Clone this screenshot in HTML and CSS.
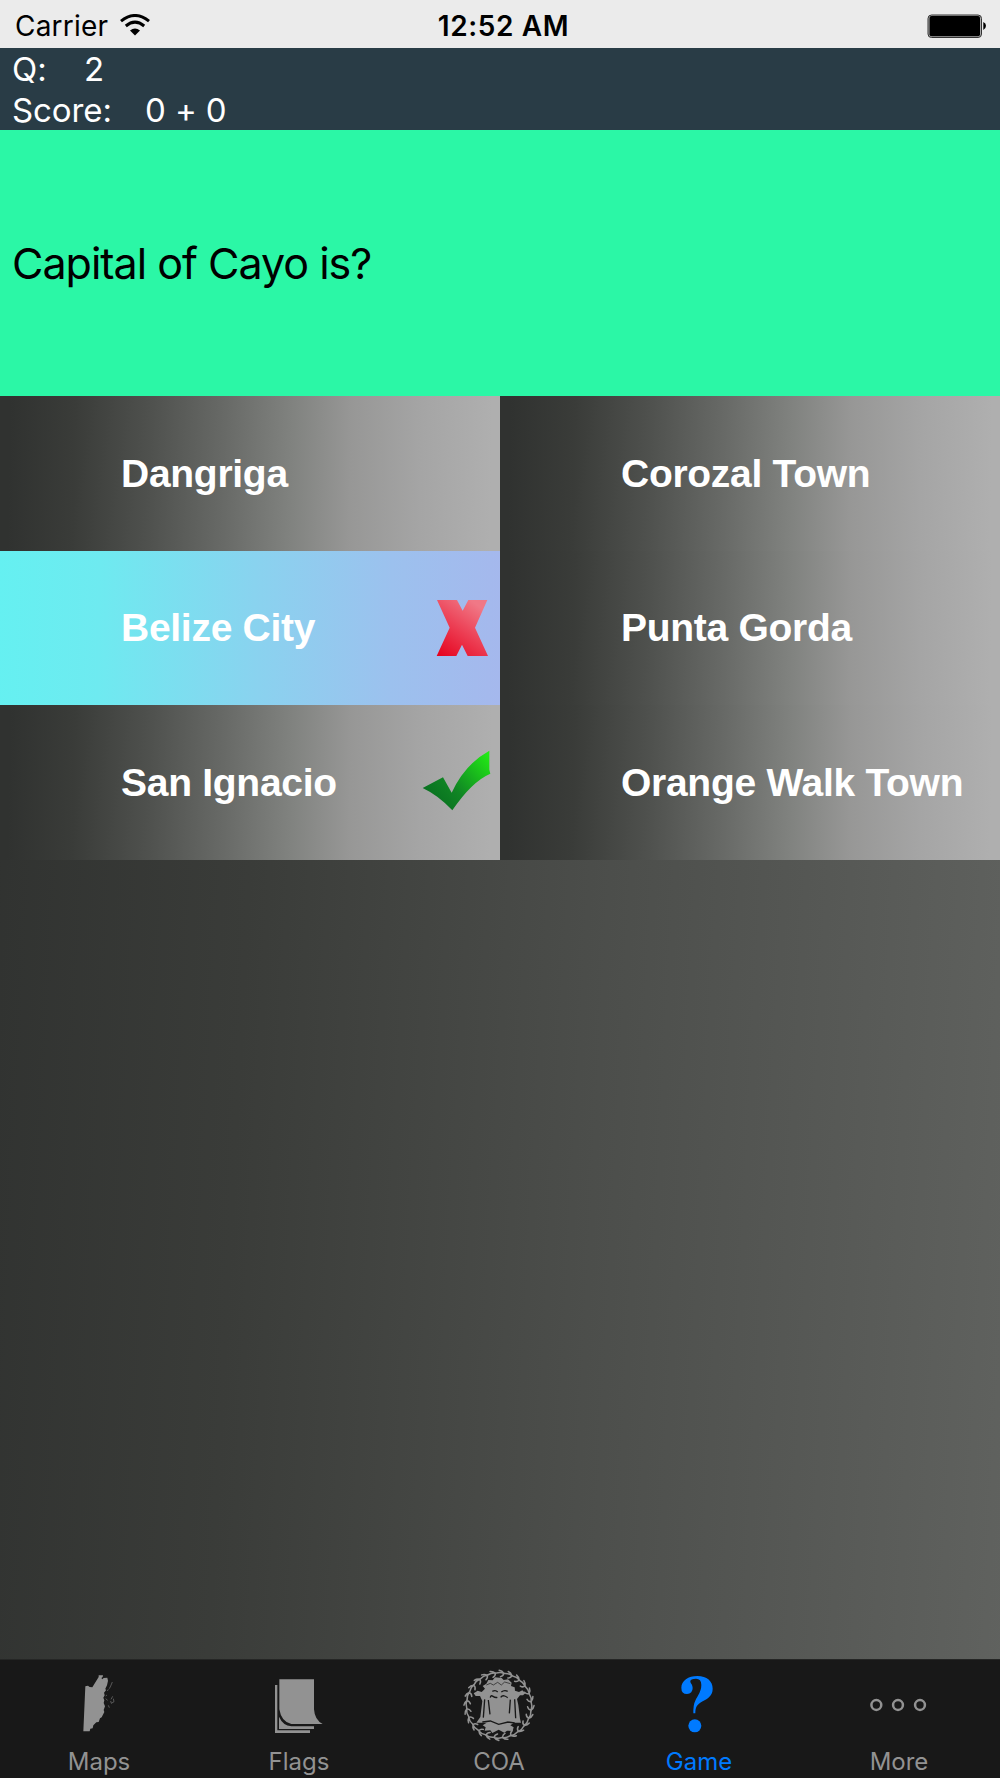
FILE: index.html
```html
<!DOCTYPE html>
<html lang="en">
<head>
<meta charset="utf-8">
<title>Capitals quiz</title>
<link rel="stylesheet" href="styles.css">
</head>
<body>
<div class="app">
  <header class="status">
    <div class="carrier"><span>Carrier</span>
      <svg width="30" height="22" viewBox="0 0 30 22"><g fill="none" stroke="#000" stroke-width="3"><path d="M1 7.2Q15-4.2 29 7.2"/><path d="M5.8 12Q15 4.3 24.2 12"/></g><path d="M10 16.6Q15 12.4 20 16.6L15 21.6Z"/></svg>
    </div>
    <span class="clock">12:52 AM</span>
    <svg class="battery" width="60" height="25" viewBox="0 0 60 25"><rect x="1" y="1" width="53.5" height="22.5" rx="3.5" fill="#aaa" stroke="#333" stroke-width="1"/><rect x="2.5" y="2" width="50.5" height="20.3" rx="2"/><path d="M56.3 8Q59 9 59 11.8T56.3 16Z"/></svg>
  </header>
  <section class="scores">
    <div class="score-row"><span class="q-label">Q:</span><span>2</span></div>
    <div class="score-row"><span class="s-label">Score:</span><span class="points">0 + 0</span></div>
  </section>
  <section class="question"><span>Capital of Cayo is?</span></section>
  <main class="answers">
    <div class="answer"><span>Dangriga</span></div>
    <div class="answer"><span>Corozal Town</span></div>
    <div class="answer chosen"><span>Belize City</span>
      <svg class="mark" width="80" height="155" viewBox="60 -87 240 465"><defs><linearGradient id="red" x1="0" y1="1" x2=".65" y2="0"><stop stop-color="#e5001c"/><stop offset=".5" stop-color="#ec3a50"/><stop offset="1" stop-color="#f07886"/></linearGradient></defs><path fill="url(#red)" d="M111 60H171L188 92L205 60H262L225 143L264 228H203L186 194L169 228H110L149 143Z"/></svg>
    </div>
    <div class="answer"><span>Punta Gorda</span></div>
    <div class="answer"><span>San Ignacio</span>
      <svg class="mark" width="80" height="155" viewBox="60 376 240 465"><defs><linearGradient id="green" x1=".1" y1=".8" x2="1" y2=".1"><stop stop-color="#087020"/><stop offset=".35" stop-color="#108524"/><stop offset="1" stop-color="#22ea15"/></linearGradient></defs><path fill="url(#green)" d="M68 625L129 593L155 639Q195 553 268 513V570L271 582Q215 606 157 692Q115 647 68 625Z"/></svg>
    </div>
    <div class="answer"><span>Orange Walk Town</span></div>
  </main>
  <div class="space"></div>
  <nav class="tabs">
    <div class="tab">
      <svg viewBox="0 27 360 255"><path d="M136 109L144 107L149 111L157 112L176 81V76H189L188 81L184 84L187 88L191 84L202 83L204 92L201 106L196 116L198 121L192 128L194 136L190 143L193 151L191 159L195 169L191 180L193 186L185 202L180 205L176 216L169 217L160 226L158 235L151 236L149 244H130Z"/><path fill="none" stroke="currentColor" stroke-width="1.6" d="M217 96L212 108L208 116M205 118L202 123M218 139L213 148M220 146L222 155L214 160L212 153M197 138L201 135M197 146L203 151M205 166L208 173"/></svg>
      <span>Maps</span>
    </div>
    <div class="tab">
      <svg viewBox="0 27 360 255"><path d="M118 88H222V178Q224 210 248 222H154Q124 216 118 178Z"/><path d="M105 105H112V241H210V249H105Z"/><path d="M117 200Q129 227 154 229H222V237H117Z"/></svg>
      <span>Flags</span>
    </div>
    <div class="tab">
      <svg viewBox="0 27 360 255"><defs><path id="leaf" d="M-14 1Q-2-4 10 0M9 0Q9 8 0 11M9 0Q4-7-5-8" fill="none" stroke="currentColor" stroke-width="4.600" stroke-linecap="round"/>
        <g id="half"><use href="#leaf" transform="rotate(3) translate(0 -97)"/><use href="#leaf" transform="rotate(18) translate(0 -97)"/><use href="#leaf" transform="rotate(33) translate(0 -97)"/><use href="#leaf" transform="rotate(48) translate(0 -97)"/><use href="#leaf" transform="rotate(63) translate(0 -97)"/><use href="#leaf" transform="rotate(78) translate(0 -97)"/></g></defs>
        <g transform="translate(177 166)"><use href="#half"/><use href="#half" transform="rotate(90)"/><use href="#half" transform="rotate(180)"/><use href="#half" transform="rotate(270)"/></g>
        <path d="M139 101L145 90L158 91L165 82L185 84L191 90L204 88L215 98L213 108L224 112L225 122L237 126L247 121L256 130L249 136H240L231 147L235 165L240 206L243 218H222L211 226L221 232L218 243L201 242L193 248L176 239L157 249L151 241L134 242L137 232L128 226L140 218H109L121 201L127 153L120 138H107L101 130L113 122L125 126L135 116L128 108Z"/>
        <g fill="none" stroke="#181818" stroke-width="4"><path d="M134 148L130 203M145 150L150 193M211 149L208 190M224 148L227 205M127 216L151 213L176 223L204 216L224 219"/><path d="M139 105L151 100L160 105L173 97L184 105L194 96L211 101" stroke-width="2"/><path d="M151 143Q152 134 159 139T172 142M182 142Q187 135 194 138T203 143M157 124Q167 119 173 126M184 126Q193 119 203 124" stroke-width="4"/></g></svg>
      <span>COA</span>
    </div>
    <div class="tab active">
      <svg viewBox="0 27 360 255"><path d="M160 190V181Q160 158 173 139Q184 121 184 105Q184 86 168 86Q151 86 151 94C151 101 158 103 158 114Q158 131 141 132Q124 132 124 113C124 92 145 78 172 78C201 78 218 94 218 116C218 137 204 145 188 154C170 164 166 173 166 190Z"/><circle cx="164.500" cy="227.500" r="19.500"/></svg>
      <span>Game</span>
    </div>
    <div class="tab">
      <svg viewBox="0 27 360 255"><g fill="none" stroke="currentColor" stroke-width="7.500"><circle cx="109" cy="165" r="14.800"/><circle cx="174" cy="165" r="14.800"/><circle cx="240" cy="165" r="14.800"/></g></svg>
      <span>More</span>
    </div>
  </nav>
</div>
</body>
</html>
```

FILE: styles.css
```css
* { box-sizing: border-box; }
body { margin: 0; font-family: Inter, "Liberation Sans", sans-serif; }
.app {
  width: 1000px; height: 1778px;
  display: flex; flex-direction: column;
  background: linear-gradient(93deg, #303230 2%, #3a3c39 27%, #4c4e4b 60%, #60625f 100%);
}
.status {
  height: 48px; padding: 0 13px 0 15px;
  display: grid; grid-template-columns: 1fr auto 1fr; align-items: center;
  background: #ebebeb; color: #000; line-height: 50px;
  white-space: nowrap;
}
.carrier { display: flex; align-items: center; gap: 12px; font-size: 28px; letter-spacing: 0.2px; }
.carrier span, .clock { padding-top: 1px; }
.carrier svg { margin-bottom: 1px; }
.clock { font-size: 28px; font-weight: 600; padding-left: 5px; letter-spacing: 0.6px; }
.battery { justify-self: end; margin-top: 1px; }
.scores { height: 82px; padding: 1px 0 0 12px; background: #293c46; color: #fff; font-size: 33px; line-height: 41px; letter-spacing: -0.1px; }
.score-row { display: flex; height: 41px; }
.q-label { width: 72px; }
.s-label { width: 133px; }
.question { height: 266px; padding-left: 12px; display: flex; align-items: center; background: #2bf7a6; color: #000; font-size: 43px; letter-spacing: -1px; }
.answers { display: grid; grid-template-columns: 500px 500px; grid-template-rows: 155px 154px 155px; }
.answer {
  display: flex; align-items: center; justify-content: space-between; padding-left: 121px;
  background: linear-gradient(91deg, #303230 2%, #3a3c39 15%, #4f514e 30%, #686a67 45%, #80827f 58%, #979796 70%, #a5a5a5 84%, #afafaf 98%);
  color: #fff; font: bold 39px "Liberation Sans", Arial, sans-serif; letter-spacing: -0.28px; white-space: nowrap;
}
.chosen { background: linear-gradient(91deg, #65f0f1, #6eeaf0 20%, #8ad2ef 52%, #9cc1ee 78%, #a5b8ed); }
.mark { flex: none; }
.space { flex: 1; }
.tabs { height: 119px; display: grid; grid-template-columns: repeat(5, 200px); background: #181818; box-shadow: inset 0 1px #252625; color: #929292; }
.tab { display: flex; flex-direction: column; align-items: center; font-size: 24px; line-height: 36px; }
.tab span { margin-left: -2px; }
.tab svg { width: 120px; height: 85px; fill: currentColor; flex: none; }
.active { color: #007aff; }
```
